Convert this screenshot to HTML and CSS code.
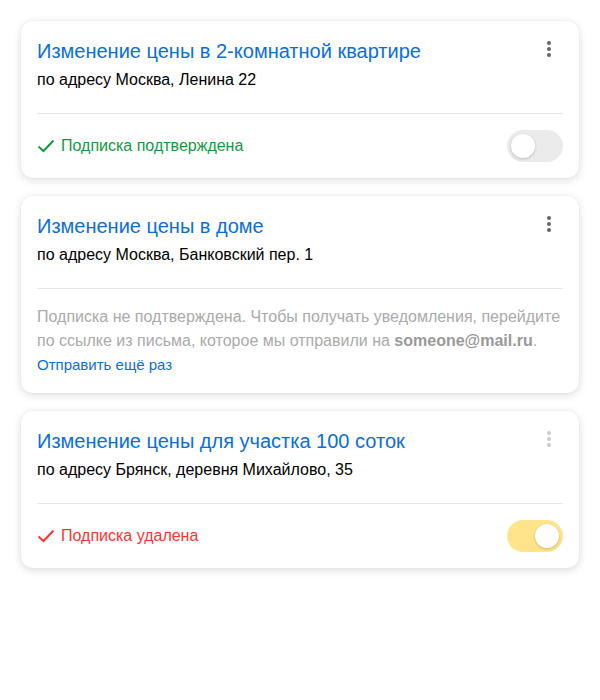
FILE: index.html
```html
<!DOCTYPE html>
<html lang="ru">
<head>
<meta charset="utf-8">
<link rel="stylesheet" href="styles.css">
</head>
<body>
<div class="list">
  <div class="card">
    <div class="head">
      <div class="info">
        <div class="title">Изменение цены в 2-комнатной квартире</div>
        <div class="addr">по адресу Москва, Ленина 22</div>
      </div>
      <div class="more"><span></span><span></span><span></span></div>
    </div>
    <div class="divider"></div>
    <div class="status-row">
      <div class="status ok">
        <svg width="18" height="14" viewBox="0 0 18 14"><path d="M1.5 7.5 L6.5 12 L16.5 1.5" fill="none" stroke="currentColor" stroke-width="2"/></svg>
        <span>Подписка подтверждена</span>
      </div>
      <div class="toggle"><div class="knob"></div></div>
    </div>
  </div>

  <div class="card">
    <div class="head">
      <div class="info">
        <div class="title">Изменение цены в доме</div>
        <div class="addr">по адресу Москва, Банковский пер. 1</div>
      </div>
      <div class="more"><span></span><span></span><span></span></div>
    </div>
    <div class="divider"></div>
    <div class="note">
      <p>Подписка не подтверждена. Чтобы получать уведомления, перейдите по ссылке из письма, которое мы отправили на <b>someone@mail.ru</b>.</p>
      <a class="resend" href="#">Отправить ещё раз</a>
    </div>
  </div>

  <div class="card">
    <div class="head">
      <div class="info">
        <div class="title">Изменение цены для участка 100 соток</div>
        <div class="addr">по адресу Брянск, деревня Михайлово, 35</div>
      </div>
      <div class="more light"><span></span><span></span><span></span></div>
    </div>
    <div class="divider"></div>
    <div class="status-row">
      <div class="status removed">
        <svg width="18" height="14" viewBox="0 0 18 14"><path d="M1.5 7.5 L6.5 12 L16.5 1.5" fill="none" stroke="currentColor" stroke-width="2"/></svg>
        <span>Подписка удалена</span>
      </div>
      <div class="toggle on"><div class="knob"></div></div>
    </div>
  </div>
</div>
</body>
</html>
```

FILE: styles.css
```css
* { box-sizing: border-box; }
body {
  margin: 0;
  background: #fff;
  font-family: "Liberation Sans", Arial, sans-serif;
  color: #000;
}
.list {
  padding: 21px 21px;
  display: flex;
  flex-direction: column;
  gap: 18px;
}
.card {
  background: #fff;
  border-radius: 12px;
  box-shadow: 0 2px 8px rgba(0,0,0,0.14), 0 0 2px rgba(0,0,0,0.06);
  padding: 16px 16px 16px 16px;
}
.head {
  display: flex;
  justify-content: space-between;
  align-items: flex-start;
}
.title {
  font-size: 20px;
  line-height: 28px;
  color: #0a6ede;
}
.addr {
  font-size: 16px;
  line-height: 24px;
  margin-top: 3px;
}
.more {
  display: flex;
  flex-direction: column;
  gap: 2.2px;
  width: 28px;
  align-items: center;
  padding-top: 4px;
}
.more span {
  width: 3.8px;
  height: 3.8px;
  border-radius: 50%;
  background: #666;
}
.more.light span { background: #ccc; }
.divider {
  height: 1px;
  background: #e6e6e6;
  margin-top: 21px;
}
.status-row {
  margin-top: 16px;
  display: flex;
  justify-content: space-between;
  align-items: center;
  height: 32px;
}
.status {
  display: flex;
  align-items: center;
  gap: 6px;
  font-size: 16px;
}
.status svg { display: block; }
.status.ok { color: #129a3f; }
.status.removed { color: #ff3333; }
.toggle {
  width: 56px;
  height: 32px;
  border-radius: 16px;
  background: #ebebeb;
  padding: 4px;
  display: flex;
}
.toggle .knob {
  width: 24px;
  height: 24px;
  border-radius: 50%;
  background: #fff;
  box-shadow: 0 1px 3px rgba(0,0,0,0.2);
}
.toggle.on {
  background: #ffe48a;
  justify-content: flex-end;
}
.note {
  margin-top: 16px;
}
.note p {
  margin: 0;
  font-size: 16px;
  line-height: 24px;
  color: #aaa;
}
.note b { color: #999; }
.resend {
  display: block;
  font-size: 15px;
  line-height: 24px;
  color: #0a6ede;
  text-decoration: none;
}
```
